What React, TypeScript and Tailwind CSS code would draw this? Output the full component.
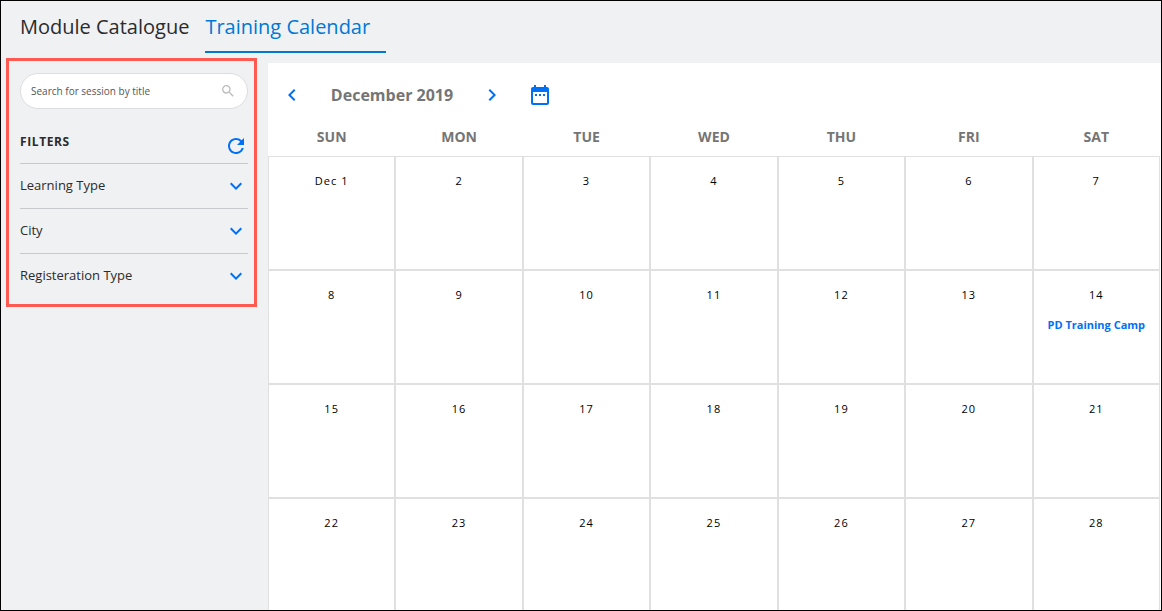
import clsx from "clsx";
import {
  MdChevronLeft,
  MdChevronRight,
  MdDateRange,
  MdExpandMore,
  MdRefresh,
  MdSearch,
} from "react-icons/md";

const WEEKDAYS = ["SUN", "MON", "TUE", "WED", "THU", "FRI", "SAT"];
const FILTERS = ["Learning Type", "City", "Registeration Type"];
const EVENTS: Record<number, string> = { 14: "PD Training Camp" };
const WEEKS = [0, 1, 2, 3].map((week) =>
  WEEKDAYS.map((_, day) => week * 7 + day + 1)
);

export default function App() {
  return (
    <div className="flex h-screen flex-col overflow-hidden border border-black bg-[#f0f1f3] font-['Open_Sans',sans-serif] text-[#2b2b2b]">
      <nav className="flex shrink-0 items-start pb-2.5 pl-[19px]">
        <TabLink label="Module Catalogue" />
        <TabLink label="Training Calendar" active />
      </nav>
      <div className="flex min-h-0 grow items-start">
        <Sidebar />
        <Calendar />
      </div>
    </div>
  );
}

function TabLink({ label, active = false }: { label: string; active?: boolean }) {
  return (
    <a
      href="#"
      className={clsx(
        "border-b-2 pt-3 pr-4 pb-2.5 text-xl leading-7",
        active ? "border-[#0078d4] text-[#0078d4]" : "border-transparent"
      )}
    >
      {label}
    </a>
  );
}

function Sidebar() {
  return (
    <aside className="-mt-[5px] mr-[11px] ml-[5px] w-[251px] shrink-0 border-3 border-[#ff5a52] pt-3 pr-1.5 pb-[5px] pl-[11px]">
      <div className="relative">
        <input
          type="text"
          aria-label="Search for session by title"
          placeholder="Search for session by title"
          className="block h-9 w-full rounded-full border border-[#dcdddf] bg-white pr-9 pl-2.5 text-[10px] placeholder:text-[#555] focus:outline-none"
        />
        <MdSearch
          size={16}
          className="absolute top-2.5 right-3 text-[#bdbdbd]"
        />
      </div>
      <div className="flex h-[55px] items-end justify-between border-b border-[#c8c9cc] pb-[5px]">
        <h2 className="pb-2 text-xs font-bold tracking-wider">FILTERS</h2>
        <button type="button" aria-label="Reset filters" className="text-[#0070f5]">
          <MdRefresh size={24} />
        </button>
      </div>
      {FILTERS.map((filter) => (
        <button
          key={filter}
          type="button"
          className="flex h-[45px] w-full items-center justify-between border-b border-[#c8c9cc] text-[13px] last:border-transparent"
        >
          {filter}
          <MdExpandMore size={24} className="text-[#0070f5]" />
        </button>
      ))}
    </aside>
  );
}

function Calendar() {
  return (
    <main className="min-w-0 grow bg-white pr-px">
      <div className="flex items-center pt-5 pl-3 text-[#0070f5]">
        <button type="button" aria-label="Previous month">
          <MdChevronLeft size={24} />
        </button>
        <h1 className="w-[176px] text-center text-base leading-6 font-bold text-[#757575]">
          December 2019
        </h1>
        <button type="button" aria-label="Next month">
          <MdChevronRight size={24} />
        </button>
        <button type="button" aria-label="Pick a date" className="ml-6">
          <MdDateRange size={24} />
        </button>
      </div>
      <table className="mt-2.5 w-full table-fixed border-separate border-spacing-0">
        <thead>
          <tr className="h-[39px]">
            {WEEKDAYS.map((day) => (
              <th key={day} className="p-0 text-sm font-bold text-[#757575]">
                {day}
              </th>
            ))}
          </tr>
        </thead>
        <tbody>
          {WEEKS.map((week) => (
            <tr key={week[0]} className="h-[114px]">
              {week.map((day) => (
                <DayCell key={day} day={day} />
              ))}
            </tr>
          ))}
        </tbody>
      </table>
    </main>
  );
}

function DayCell({ day }: { day: number }) {
  return (
    <td className="border border-[#e0e0e0] px-1 pt-4 align-top text-center text-[11px] leading-4">
      <div className="tracking-widest text-black">
        {day === 1 ? "Dec 1" : day}
      </div>
      {EVENTS[day] && (
        <a href="#" className="mt-3.5 block font-bold text-[#0070f5]">
          {EVENTS[day]}
        </a>
      )}
    </td>
  );
}
